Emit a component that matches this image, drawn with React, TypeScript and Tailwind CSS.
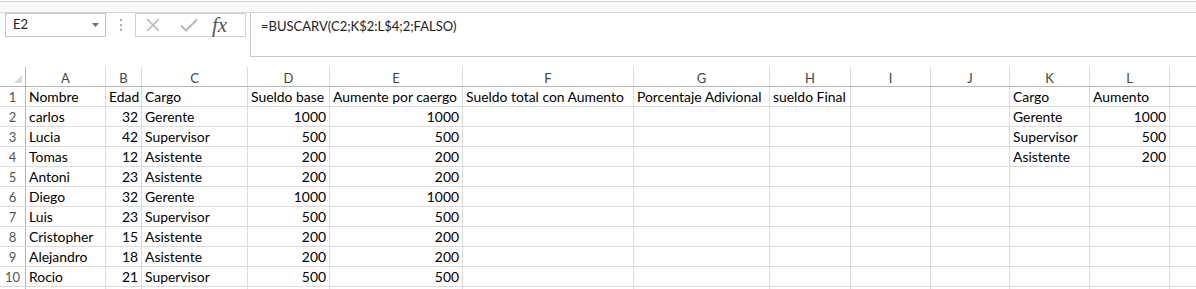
import React from 'react'

const cols = [
  { key: 'A', w: 'w-[80px]' },
  { key: 'B', w: 'w-[36px]' },
  { key: 'C', w: 'w-[106px]' },
  { key: 'D', w: 'w-[82px]' },
  { key: 'E', w: 'w-[133px]' },
  { key: 'F', w: 'w-[171px]' },
  { key: 'G', w: 'w-[136px]' },
  { key: 'H', w: 'w-[81px]' },
  { key: 'I', w: 'w-[80px]' },
  { key: 'J', w: 'w-[79px]' },
  { key: 'K', w: 'w-[80px]' },
  { key: 'L', w: 'w-[80px]' },
  { key: '', w: 'w-[40px]' },
]

type Cell = string | number

const rows: Cell[][] = [
  ['Nombre', 'Edad', 'Cargo', 'Sueldo base', 'Aumente por caergo', 'Sueldo total con Aumento', 'Porcentaje Adivional', 'sueldo Final', '', '', 'Cargo', 'Aumento', ''],
  ['carlos', 32, 'Gerente', 1000, 1000, '', '', '', '', '', 'Gerente', 1000, ''],
  ['Lucia', 42, 'Supervisor', 500, 500, '', '', '', '', '', 'Supervisor', 500, ''],
  ['Tomas', 12, 'Asistente', 200, 200, '', '', '', '', '', 'Asistente', 200, ''],
  ['Antoni', 23, 'Asistente', 200, 200, '', '', '', '', '', '', '', ''],
  ['Diego', 32, 'Gerente', 1000, 1000, '', '', '', '', '', '', '', ''],
  ['Luis', 23, 'Supervisor', 500, 500, '', '', '', '', '', '', '', ''],
  ['Cristopher', 15, 'Asistente', 200, 200, '', '', '', '', '', '', '', ''],
  ['Alejandro', 18, 'Asistente', 200, 200, '', '', '', '', '', '', '', ''],
  ['Rocio', 21, 'Supervisor', 500, 500, '', '', '', '', '', '', '', ''],
]

export default function App() {
  return (
    <div className="w-[1196px] h-[289px] overflow-hidden bg-white font-['Lato',sans-serif] text-[13.9px] text-black">
      {/* ribbon edge */}
      <div className="h-[13px] pt-px">
        <div className="h-[12px] border-t border-b border-[#d4d4d4] bg-[#f9f9f9]" />
      </div>

      {/* formula bar */}
      <div className="flex h-[44px] items-start">
        <div className="ml-[5px] flex h-[24px] w-[101px] items-center justify-between border border-[#c6c6c6] pl-[7px] pr-[6px] text-[13px] text-[#222]">
          <span>E2</span>
          <svg width="7" height="4" viewBox="0 0 7 4"><path d="M0 0h7L3.5 4z" fill="#707070" /></svg>
        </div>
        <div className="ml-[14px] mt-[6px] flex h-[12px] flex-col justify-between">
          <span className="block h-[2px] w-[2px] bg-[#a8a8a8]" />
          <span className="block h-[2px] w-[2px] bg-[#a8a8a8]" />
          <span className="block h-[2px] w-[2px] bg-[#a8a8a8]" />
        </div>
        <div className="ml-[13px] flex h-[24px] w-[111px] items-center border border-[#d0d0d0] pl-[9px]">
          <svg width="16" height="16" viewBox="0 0 16 16">
            <path d="M2 2l12 12M14 2L2 14" stroke="#b8b8b8" strokeWidth="1.6" fill="none" />
          </svg>
          <svg className="ml-[18px]" width="20" height="16" viewBox="0 0 20 16">
            <path d="M2 8.5l5 5L18 2.5" stroke="#b8b8b8" strokeWidth="2" fill="none" />
          </svg>
          <span className="ml-[13px] font-['Liberation_Serif',serif] text-[21px] italic leading-none text-[#555]">fx</span>
        </div>
        <div className="ml-[4px] h-[44px] flex-1 border-l border-b border-[#c6c6c6] pl-[10px] pt-[4px] text-[13px] text-[#222]">
          =BUSCARV(C2;K$2:L$4;2;FALSO)
        </div>
      </div>

      {/* gap */}
      <div className="h-[10px]" />

      {/* column headers */}
      <div className="flex h-[20px] border-b border-[#b8b8b8] text-[13px] text-[#444]">
        <div className="relative w-[26px] shrink-0 border-r border-[#b8b8b8]">
          <svg className="absolute right-[3px] bottom-[3px]" width="8" height="8" viewBox="0 0 8 8">
            <path d="M8 0v8H0z" fill="#dadada" />
          </svg>
        </div>
        {cols.map((c, i) => (
          <div key={i} className={`${c.w} shrink-0 border-r border-[#dcdcdc] pt-[2px] text-center leading-[18px]`}>
            {c.key}
          </div>
        ))}
      </div>

      {/* rows */}
      {rows.map((r, ri) => (
        <div key={ri} className="flex h-[20px]">
          <div className="w-[26px] shrink-0 border-r border-b border-[#b8b8b8] border-b-[#dcdcdc] text-center text-[13px] leading-[20px] text-[#555]">
            {ri + 1}
          </div>
          {cols.map((c, ci) => {
            const v = r[ci]
            const num = typeof v === 'number'
            return (
              <div
                key={ci}
                className={`${c.w} shrink-0 overflow-visible whitespace-nowrap border-r border-b border-[#dcdcdc] px-[3px] leading-[20px] ${num ? 'text-right' : 'text-left'}`}
              >
                {v}
              </div>
            )
          })}
        </div>
      ))}
      {/* next row, barely visible */}
      <div className="flex h-[20px]">
        <div className="w-[26px] shrink-0 border-r border-[#b8b8b8]" />
        {cols.map((c, ci) => (
          <div key={ci} className={`${c.w} shrink-0 border-r border-[#dcdcdc]`} />
        ))}
      </div>
    </div>
  )
}
